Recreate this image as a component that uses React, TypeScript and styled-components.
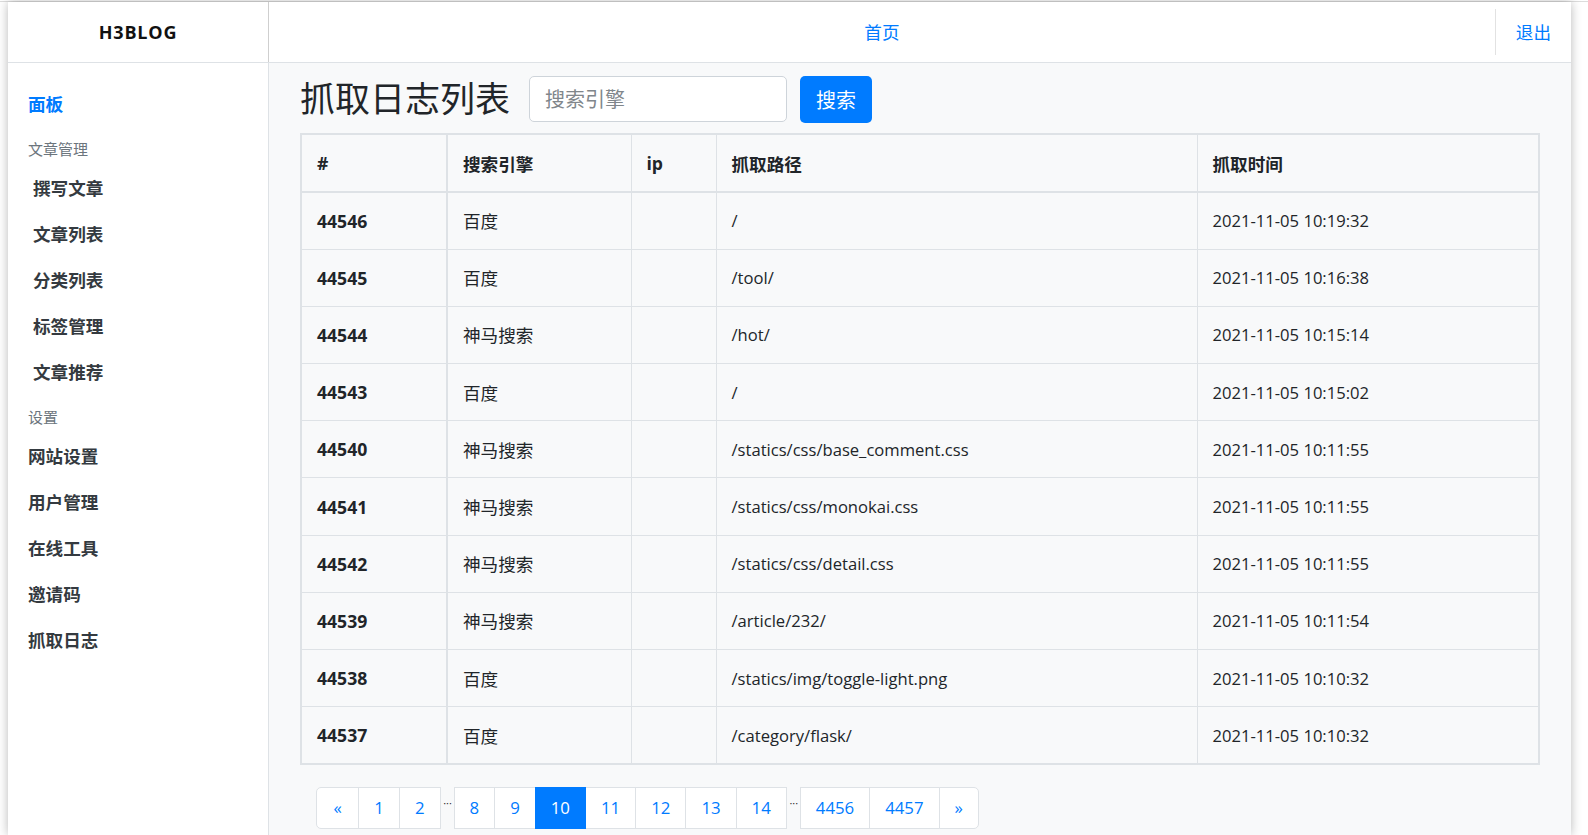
import React from "react";
import styled, { createGlobalStyle } from "styled-components";

const GlobalStyle = createGlobalStyle`
  html, body {
    margin: 0;
    padding: 0;
    background: #fff;
  }
  body {
    padding-top: 1px;
    font-family: "Open Sans", "Noto Sans CJK SC", sans-serif;
    color: #212529;
    overflow: hidden;
  }
  * {
    box-sizing: border-box;
  }
`;

const TopRule = styled.div`
  border-top: 1px solid #dcdcdc;
`;

const Frame = styled.div`
  width: 1563px;
  height: 833px;
  margin-left: 8px;
  background: #fff;
  box-shadow: 0 0 10px rgba(0, 0, 0, 0.28);
  display: flex;
  flex-direction: column;
  overflow: hidden;
`;

const Header = styled.header`
  display: flex;
  align-items: center;
  height: 61px;
  border-bottom: 1px solid #dee2e6;
  flex-shrink: 0;
`;

const Brand = styled.div`
  width: 261px;
  height: 100%;
  border-right: 1px solid #cfcfcf;
  display: flex;
  align-items: center;
  justify-content: center;
  font-weight: 700;
  font-size: 18px;
  letter-spacing: 0.8px;
  color: #111;
`;

const NavCenter = styled.nav`
  flex: 1;
  display: flex;
  justify-content: center;
`;

const NavLink = styled.a`
  color: #007bff;
  font-size: 17.6px;
  text-decoration: none;
  line-height: 26px;
`;

const NavRight = styled.div`
  height: 46px;
  border-left: 1px solid #e2e2e2;
  padding: 0 20px;
  display: flex;
  align-items: center;
`;

const Body = styled.div`
  flex: 1;
  display: flex;
  min-height: 0;
`;

const Sidebar = styled.aside`
  width: 261px;
  flex-shrink: 0;
  border-right: 1px solid #dee2e6;
  padding: 17px 0 0 20px;
  display: flex;
  flex-direction: column;
`;

const SideItem = styled.a<{ $active?: boolean; $sub?: boolean }>`
  display: flex;
  align-items: center;
  height: 46px;
  padding-left: ${(p) => (p.$sub ? "5px" : "0")};
  font-size: 17.6px;
  font-weight: 700;
  color: ${(p) => (p.$active ? "#007bff" : "#343a40")};
  text-decoration: none;
`;

const SideLabel = styled.div`
  font-size: 15px;
  line-height: 22px;
  color: #6c757d;
  margin: 12px 0 4px;
`;

const Main = styled.main`
  flex: 1;
  background: #f8f9fa;
  padding: 13px 31px 0 31px;
`;

const TitleRow = styled.div`
  display: flex;
  align-items: center;
  height: 46px;
`;

const Title = styled.h1`
  margin: 0 19px 0 0;
  font-size: 35px;
  font-weight: 400;
  line-height: 46px;
  color: #212529;
`;

const SearchInput = styled.input`
  width: 258px;
  height: 46px;
  border: 1px solid #ced4da;
  border-radius: 5px;
  background: #fff;
  padding: 0 15px;
  font-family: inherit;
  font-size: 20px;
  color: #495057;
  outline: none;

  &::placeholder {
    color: #80868b;
  }
`;

const SearchButton = styled.button`
  margin-left: 13px;
  width: 72px;
  height: 47px;
  border: none;
  border-radius: 5px;
  background: #007bff;
  color: #fff;
  font-family: inherit;
  font-size: 20px;
`;

const Table = styled.table`
  margin-top: 11px;
  width: 100%;
  border-collapse: collapse;
  border: 2px solid #dee2e6;
  table-layout: fixed;
  font-size: 17.6px;
`;

const HeadCell = styled.th<{ $thick?: boolean }>`
  height: 58px;
  padding: 0 15px;
  text-align: left;
  font-weight: 700;
  border: 1px solid #dee2e6;
  border-bottom: 2px solid #dee2e6;
  border-right-width: ${(p) => (p.$thick ? "2px" : "1px")};
`;

const Cell = styled.td<{ $bold?: boolean; $thick?: boolean; $latin?: boolean }>`
  height: 57.2px;
  padding: 0 15px;
  border: 1px solid #dee2e6;
  border-right-width: ${(p) => (p.$thick ? "2px" : "1px")};
  font-weight: ${(p) => (p.$bold ? 700 : 400)};
  font-size: ${(p) => (p.$latin ? "16.6px" : "17.6px")};
  white-space: nowrap;
`;

const Pager = styled.ul`
  list-style: none;
  margin: 22px 0 0 17px;
  padding: 0;
  display: flex;
`;

const PageItem = styled.li<{ $active?: boolean; $first?: boolean; $last?: boolean }>`
  height: 42px;
  padding: 0 ${(p) => (p.$first ? "16.5px" : "15px")};
  display: flex;
  align-items: center;
  justify-content: center;
  font-size: 16.8px;
  color: ${(p) => (p.$active ? "#fff" : "#007bff")};
  background: ${(p) => (p.$active ? "#007bff" : "#fff")};
  border: 1px solid ${(p) => (p.$active ? "#007bff" : "#dee2e6")};
  margin-left: -1px;
  border-radius: ${(p) => (p.$first ? "5px 0 0 5px" : p.$last ? "0 5px 5px 0" : "0")};
  position: relative;
  z-index: ${(p) => (p.$active ? 1 : 0)};
`;

const PageGap = styled.li`
  width: 14px;
  height: 42px;
  display: flex;
  align-items: center;
  justify-content: center;
  font-size: 11px;
  letter-spacing: 0;
  color: #333;
  transform: translateY(-5px);
  overflow: visible;
  white-space: nowrap;
`;

const rows = [
  ["44546", "百度", "/", "2021-11-05 10:19:32"],
  ["44545", "百度", "/tool/", "2021-11-05 10:16:38"],
  ["44544", "神马搜索", "/hot/", "2021-11-05 10:15:14"],
  ["44543", "百度", "/", "2021-11-05 10:15:02"],
  ["44540", "神马搜索", "/statics/css/base_comment.css", "2021-11-05 10:11:55"],
  ["44541", "神马搜索", "/statics/css/monokai.css", "2021-11-05 10:11:55"],
  ["44542", "神马搜索", "/statics/css/detail.css", "2021-11-05 10:11:55"],
  ["44539", "神马搜索", "/article/232/", "2021-11-05 10:11:54"],
  ["44538", "百度", "/statics/img/toggle-light.png", "2021-11-05 10:10:32"],
  ["44537", "百度", "/category/flask/", "2021-11-05 10:10:32"],
];

const pages: (string | null)[] = ["«", "1", "2", null, "8", "9", "10", "11", "12", "13", "14", null, "4456", "4457", "»"];

export default function App() {
  return (
    <>
      <GlobalStyle />
      <TopRule />
      <Frame>
        <Header>
          <Brand>H3BLOG</Brand>
          <NavCenter>
            <NavLink href="#">首页</NavLink>
          </NavCenter>
          <NavRight>
            <NavLink href="#">退出</NavLink>
          </NavRight>
        </Header>
        <Body>
          <Sidebar>
            <SideItem $active href="#">面板</SideItem>
            <SideLabel>文章管理</SideLabel>
            <SideItem $sub href="#">撰写文章</SideItem>
            <SideItem $sub href="#">文章列表</SideItem>
            <SideItem $sub href="#">分类列表</SideItem>
            <SideItem $sub href="#">标签管理</SideItem>
            <SideItem $sub href="#">文章推荐</SideItem>
            <SideLabel>设置</SideLabel>
            <SideItem href="#">网站设置</SideItem>
            <SideItem href="#">用户管理</SideItem>
            <SideItem href="#">在线工具</SideItem>
            <SideItem href="#">邀请码</SideItem>
            <SideItem href="#">抓取日志</SideItem>
          </Sidebar>
          <Main>
            <TitleRow>
              <Title>抓取日志列表</Title>
              <SearchInput placeholder="搜索引擎" />
              <SearchButton>搜索</SearchButton>
            </TitleRow>
            <Table>
              <colgroup>
                <col style={{ width: 146 }} />
                <col style={{ width: 184 }} />
                <col style={{ width: 85 }} />
                <col style={{ width: 481 }} />
                <col />
              </colgroup>
              <thead>
                <tr>
                  <HeadCell $thick>#</HeadCell>
                  <HeadCell>搜索引擎</HeadCell>
                  <HeadCell>ip</HeadCell>
                  <HeadCell>抓取路径</HeadCell>
                  <HeadCell>抓取时间</HeadCell>
                </tr>
              </thead>
              <tbody>
                {rows.map((r) => (
                  <tr key={r[0]}>
                    <Cell $bold $thick>{r[0]}</Cell>
                    <Cell>{r[1]}</Cell>
                    <Cell></Cell>
                    <Cell $latin>{r[2]}</Cell>
                    <Cell $latin>{r[3]}</Cell>
                  </tr>
                ))}
              </tbody>
            </Table>
            <Pager>
              {pages.map((p, i) =>
                p === null ? (
                  <PageGap key={i}>···</PageGap>
                ) : (
                  <PageItem
                    key={i}
                    $active={p === "10"}
                    $first={i === 0}
                    $last={i === pages.length - 1}
                  >
                    {p}
                  </PageItem>
                )
              )}
            </Pager>
          </Main>
        </Body>
      </Frame>
    </>
  );
}
